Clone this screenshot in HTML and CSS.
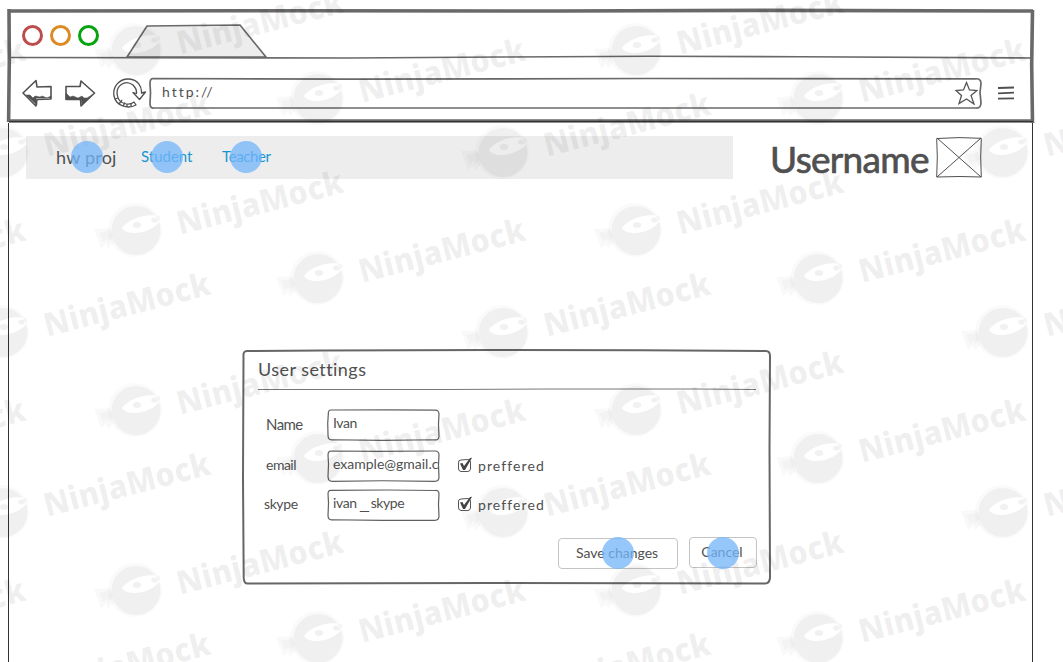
FILE: index.html
```html
<!DOCTYPE html>
<html lang="en">
<head>
<meta charset="utf-8">
<title>User settings</title>
<link rel="stylesheet" href="styles.css">
</head>
<body>
<div class="browser">
  <header class="chrome">
    <svg class="sketch chrome-frame" viewBox="8 9 1026 114" fill="none" stroke="#696969">
      <path d="M127 57L147 26L240 25L266 57Z" fill="#ededed" stroke-width="1.6"/>
      <path d="M10 57.5L350 58L500 57L650 56.3L800 56.7L1032 58" stroke-width="1.6"/>
      <path d="M9 11L300 10.7L560 11L760 10.4L1033 11" stroke-width="3.6"/>
      <path d="M1032.5 10L1031.7 65L1032.5 123M9 121L1033 121M9 9L9.3 60L8.6 122" stroke-width="3.6"/>
      <path d="M9 121.5H1033" stroke="#333" stroke-width="1.2"/>
    </svg>
    <div class="chrome-body">
      <div class="lights"><i class="light red"></i><i class="light amber"></i><i class="light green"></i></div>
      <div class="toolbar">
        <svg class="arrow" viewBox="22 79 74 28" width="74" height="28" fill="none" stroke="#505050" stroke-width="1.6" stroke-linejoin="round">
          <path d="M23 93L36 80.5L37 87L51 86.5V99L37 99.5L36 106Z"/>
          <path d="M66 86.5H80L81 81L94.5 93L81 106L80.5 99.5H66Z"/>
          <path d="M26 95L37 105L36 98L51 98V96L47 98L42 96L40 97L35 96L33 98L30 95Z" fill="#505050" stroke-width=".5"/>
          <path d="M66 99H81L82 105L92 95L87 98L84 98L82 96L78 98L73 96L70 97L66 93Z" fill="#505050" stroke-width=".5"/>
        </svg>
        <svg class="reload" viewBox="112 77 35 32" width="35" height="32" fill="none" stroke="#505050" stroke-width="1.3" stroke-linejoin="round">
          <path d="M134 102C129 106 119 104 117.500 96C115 86 125 79 133 85C136 88 137 90 136.500 93.500L133 92.500L139.500 99.500L145.500 92L141.500 93C142 87 138 79.500 129 79C119 78.500 112.500 87 114 96C116 106 128 109.500 136 105Z"/>
          <path d="M119 104L122 100M123 106L125 102.500M127 107V104M131 106V103M115 99L118 98"/>
        </svg>
        <div class="address">
          <svg class="sketch" viewBox="0 0 832 32" fill="none" stroke="#696969" stroke-width="1.7"><path d="M4 1L200 1.7L500 1L826 1.3Q831 1 831 6L830 15L831 25Q831 31 826 30.500H5Q1 31 1 26L1.500 15L1 6Q1 1 4 1Z"/></svg>
          <div class="address-body"><span class="t url">http://</span>
            <svg width="24" height="24" viewBox="954 81 24 24" fill="none" stroke="#555" stroke-width="1.300"><path d="M966.500 82.500L969.500 90L977 90.500L971 95.500L974 104L966.500 99L959 103.500L961.500 95.500L956 90.500L963.500 90Z"/></svg>
          </div>
        </div>
        <svg class="menu" width="18" height="14" viewBox="0 0 18 14" stroke="#505050" stroke-width="1.800"><path d="M1 2L17 1.500M1 7.300L17 6.700M1 12.700L17 12.300"/></svg>
      </div>
    </div>
  </header>
  <main class="page">
    <div class="top">
      <nav class="nav">
        <span class="t brand">hw proj<i class="dot"></i></span>
        <a class="t student">Student<i class="dot"></i></a>
        <a class="t teacher">Teacher<i class="dot"></i></a>
      </nav>
      <span class="t username">Username</span>
      <svg class="avatar" width="46" height="41" viewBox="0 0 46 41" fill="none" stroke="#505050"><path d="M.7 1.500L23 .6L45.300 1.300L44.700 20L45.300 40L24 39.500L.7 40L1.300 20ZM1 1L45 40M45 1L1 40"/></svg>
    </div>
    <section class="dialog">
      <svg class="sketch" viewBox="0 0 530 236" fill="none" stroke="#666" stroke-width="2"><path d="M5 2L80 1.500L250 1L400 1.300L524 2Q528 2 528 7L527.500 100L528 228Q528 234.500 523 234.500L250 234L6 234.500Q2 235 1.700 229L1 130L1.500 7Q1 2 5 2Z"/></svg>
      <div class="dialog-body">
        <h1 class="t">User settings</h1>
        <svg class="rule" width="498" height="3" viewBox="0 0 498 3" stroke="#777" fill="none"><path d="M0 1.500L190 1.500L290 1L440 1L498 1.500"/></svg>
        <form class="form">
          <label class="t name">Name</label>
          <div class="field"><svg class="sketch" viewBox="0 0 112 32" fill="none" stroke="#606060" stroke-width="1.200"><path d="M4 1L60 .8L107 1.200Q111 1 111 5L110.500 15L111 27Q111 31 107 30.500L55 31L5 30.500Q1 31 1 26L.7 14L1.300 5Q1 1 4 1Z"/></svg><span class="t ivan">Ivan</span></div><span></span>
          <label class="t email">email</label>
          <div class="field"><svg class="sketch" viewBox="0 0 112 32" fill="none" stroke="#606060" stroke-width="1.200"><path d="M4 1L50 1.400L107 1Q111 1 111 5L110.500 15L111 27Q111 31 107 31L55 30.500L5 31Q1 31 1 26L1.500 14L1 5Q1 1 4 1Z"/></svg><span class="t mail">example@gmail.c</span></div>
          <span class="check"><svg width="16" height="16" viewBox="0 0 16 16"><path d="M4 3L11 2.500Q14 3 13.500 6V12Q13 15 10 14.500H4Q1 14 1.500 11V6Q1 3 4 3Z" fill="none" stroke="#555"/><path d="M3 6.500L5.500 6L7 9L13 1L15 .8L8 13H6Z" fill="#444"/></svg><span class="t pref">preffered</span></span>
          <label class="t skype">skype</label>
          <div class="field"><svg class="sketch" viewBox="0 0 112 32" fill="none" stroke="#606060" stroke-width="1.200"><path d="M4 1.300L60 1L107 1.500Q111 1 111 5L110.500 15L111 27Q111 31 107 31L55 31L5 30.500Q1 31 1 26L1.500 14L1 5Q1 1 4 1.300Z"/></svg><span class="t iskype">ivan<b class="under">_</b>skype</span></div>
          <span class="check"><svg width="16" height="16" viewBox="0 0 16 16"><path d="M4 3L11 2.500Q14 3 13.500 6V12Q13 15 10 14.500H4Q1 14 1.500 11V6Q1 3 4 3Z" fill="none" stroke="#555"/><path d="M3 6.500L5.500 6L7 9L13 1L15 .8L8 13H6Z" fill="#444"/></svg><span class="t pref">preffered</span></span>
        </form>
        <div class="actions">
          <button class="save"><span class="t">Save changes</span><i class="dot"></i></button>
          <button class="cancel"><span class="t">Cancel</span><i class="dot"></i></button>
        </div>
      </div>
    </section>
  </main>
</div>
<svg class="watermark" width="1063" height="662">
  <defs>
    <g id="mark">
      <path fill-rule="evenodd" d="M-29 0A27 27 0 1 1 25 0A27 27 0 1 1 -29 0ZM-15 -2C-8 -12 10 -17 22 -14C26 -9 17 -1 5 2C-3 4 -12 3 -15 -2Z" fill="#000" fill-opacity=".02"/>
      <path d="M-43 -1L-27 -2L-23 12L-29 19L-31 14L-36 18Z" fill="#000" fill-opacity=".022"/>
      <path d="M-38 3L-26 0L-24 7L-29 13L-30 9L-34 12Z" fill="#000" fill-opacity=".022"/>
      <path fill-rule="evenodd" d="M-25.500 .5A24.500 24.500 0 1 1 23.500 .5A24.500 24.500 0 1 1 -25.500 .5ZM-15 -2C-8 -12 10 -17 22 -14C26 -9 17 -1 5 2C-3 4 -12 3 -15 -2Z" fill="#000" fill-opacity=".038"/>
      <ellipse cx="0" cy="-5" rx="4.200" ry="3" fill="#000" fill-opacity=".055"/>
      <ellipse cx="17.500" cy="-10" rx="3.300" ry="2.600" fill="#000" fill-opacity=".055"/>
      <text class="mark-text" transform="translate(43 5) rotate(-14.500)" textLength="171" lengthAdjust="spacingAndGlyphs">NinjaMock</text>
    </g>
    <g id="trio"><use href="#mark" x="137" y="50"/><use href="#mark" x="319" y="98"/><use href="#mark" x="504" y="152"/></g>
    <g id="row"><use href="#trio" x="-500"/><use href="#trio"/><use href="#trio" x="500"/></g>
  </defs>
  <use href="#row" y="-180"/><use href="#row"/><use href="#row" y="180"/><use href="#row" y="360"/><use href="#row" y="540"/>
</svg>
</body>
</html>
```
FILE: styles.css
```css
* { box-sizing: border-box; }
body { margin: 0; width: 1063px; height: 662px; overflow: hidden; background: #fff; color: #505050; font-family: Lato, "Open Sans", sans-serif; font-variant-ligatures: none; position: relative; }
.browser { width: 1026px; margin: 9px 0 0 8px; }
.t { font-size: 15px; line-height: 20px; white-space: nowrap; display: block; }
.sketch { grid-area: 1 / 1; width: 100%; height: 100%; overflow: visible; }
.chrome { display: grid; height: 114px; }
.chrome-body { grid-area: 1 / 1; padding: 16px 0 0 14px; }
.lights { display: flex; gap: 7px; height: 52px; }
.light { width: 21px; height: 21px; border: 3px solid; border-radius: 50%; }
.red { color: #bd4c4c; }
.amber { color: #dc8b22; }
.green { color: #06a410; }
.toolbar { display: flex; align-items: flex-start; }
.arrow { margin-top: 2px; }
.reload { margin-left: 16px; }
.address { display: grid; width: 833px; height: 33px; margin-left: 2px; }
.address-body { grid-area: 1 / 1; display: flex; justify-content: space-between; padding: 4px 4px 0 13px; }
.url { font-size: 14px; letter-spacing: 2px; margin-top: 1px; }
.menu { margin: 9px 0 0 15px; }
.page { height: 540px; width: 1025px; border: solid #333; border-width: 0 1px; }
.top { display: flex; padding: 13px 0 0 17px; height: 226px; }
.nav { display: flex; width: 707px; height: 43px; background: #ededed; padding: 10px 0 0 30px; align-items: flex-start; }
.nav .t { position: relative; }
.nav .brand { width: 85px; font-size: 18px; letter-spacing: .2px; margin-top: 1px; }
.student { width: 81px; }
.nav a { color: #1496d1; font-size: 15px; }
.nav .teacher { letter-spacing: -.4px; }
.dot { position: absolute; width: 32px; height: 32px; border-radius: 50%; background: rgba(116, 182, 250, .76); z-index: 3; }
.brand .dot { left: 15px; top: -6px; }
.student .dot { left: 10px; top: -5px; }
.teacher .dot { left: 8px; top: -5px; }
.username { width: 166px; margin-left: 37px; font-size: 37px; line-height: 46px; letter-spacing: -.7px; -webkit-text-stroke: .7px #505050; }
.avatar { margin-top: 1px; }
.dialog { display: grid; width: 530px; height: 236px; margin-left: 233px; }
.dialog-body { grid-area: 1 / 1; padding: 10px 15px 0 16px; }
h1.t { margin: 0; font-size: 18px; font-weight: 400; letter-spacing: .45px; }
.rule { display: block; margin-top: 9px; }
.form { display: grid; grid-template-columns: 69px 130px auto; grid-template-rows: 41px 39px 48px; margin: 18px 0 0; }
.form label { margin: 5px 0 0 8px; }
.form .name { letter-spacing: -.6px; }
.field { display: grid; width: 113px; height: 32px; }
.field .t { grid-area: 1 / 1; margin: 4px 2px 0 6px; overflow: hidden; font-size: 14px; }
.field .ivan { letter-spacing: -.4px; }
.field .iskype { letter-spacing: -.4px; }
.form .email { font-size: 14px; letter-spacing: -.5px; }
.form .skype { margin-left: 6px; font-size: 14px; letter-spacing: -.4px; }
.under { display: inline-block; font-weight: 400; transform: scaleX(1.7) translateY(2px); margin: 0 4px; }
.check { display: flex; padding-top: 7px; }
.pref { margin: -1px 0 0 5px; font-size: 14px; letter-spacing: 1.1px; }
.actions { display: flex; justify-content: flex-end; gap: 11px; }
button { position: relative; height: 31px; background: none; border: 1px solid #c4c4c4; border-radius: 4px; padding: 0; color: inherit; font-family: inherit; }
button .t { font-size: 14px; line-height: 20px; margin: -1px 2px 0 0; }
.save { width: 120px; margin-top: 1px; }
.cancel { width: 68px; }
.save .dot { left: 43px; top: -2px; }
.cancel .dot { left: 17px; top: -1px; }
.watermark { position: absolute; left: 0; top: 0; pointer-events: none; }
.mark-text { font: 800 33px "Open Sans", "Noto Sans", sans-serif; fill: #000; fill-opacity: .06; stroke: #000; stroke-width: .5; stroke-opacity: .02; }
```
